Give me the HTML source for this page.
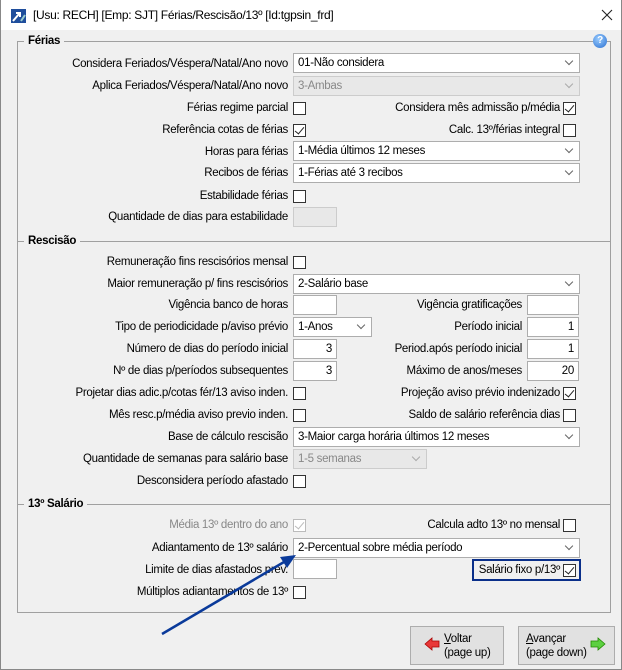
<!DOCTYPE html>
<html><head><meta charset="utf-8"><style>
*{box-sizing:border-box;margin:0;padding:0}
body{width:622px;height:670px;background:#f0f0f0;font-family:"Liberation Sans",sans-serif;font-size:11.5px;letter-spacing:-0.3px;color:#000;position:relative;overflow:hidden}
.a{position:absolute;white-space:nowrap}
.l{position:absolute;white-space:nowrap;line-height:14px}
.cb{position:absolute;width:13px;height:13px;border:1px solid #333;background:#fff}
.cb.k::after{content:"";position:absolute;left:3px;top:0px;width:4px;height:8px;border:solid #222;border-width:0 1.3px 1.3px 0;transform:rotate(40deg)}
.cb.dis{border-color:#bbb}
.cb.dis::after{border-color:#bbb}
.dd{position:absolute;height:20px;border:1px solid #adadad;background:#fff;padding:3px 4px;line-height:13px}
.dd::after{content:"";position:absolute;right:7px;top:4px;width:5px;height:5px;border:solid #666;border-width:0 1px 1px 0;transform:rotate(45deg)}
.dd.dis{background:#e8e8e8;color:#888;border-color:#ccc}
.dd.dis::after{border-color:#aaa}
.in{position:absolute;height:20px;border:1px solid #adadad;background:#fff;text-align:right;padding:3px 4px;line-height:13px}
.in.dis{background:#e8e8e8;border-color:#ccc}
.sec{position:absolute;left:17px;width:594px;border-top:1px solid #a0a0a0;height:0}
.sh{position:absolute;font-weight:bold;background:#f0f0f0;padding:0 4px;line-height:14px}
.btn{position:absolute;border:1px solid #adadad;background:#e1e1e1;line-height:14px;padding-top:5px}
</style></head><body>
<div class="a" style="left:0;top:0;width:622px;height:30px;background:#fff"></div>
<div class="a" style="left:0;top:0;width:1px;height:670px;background:#888"></div>
<div class="a" style="left:621px;top:0;width:1px;height:670px;background:#888"></div>
<div class="a" style="left:0;top:669px;width:622px;height:1px;background:#888"></div>
<svg class="a" style="left:11px;top:9px" width="15" height="14"><rect width="15" height="14" fill="#1f4e9c"/><path d="M2 12 L8 5 M5 4 L9 4 L9 8" stroke="#fff" stroke-width="2" fill="none"/><path d="M10 12 L14 6" stroke="#9cc" stroke-width="2"/></svg>
<div class="a" style="left:33px;top:8px;font-size:12px">[Usu: RECH] [Emp: SJT] Férias/Rescisão/13º [Id:tgpsin_frd]</div>
<svg class="a" style="left:601px;top:9px" width="12" height="12"><path d="M1 1 L11 11 M11 1 L1 11" stroke="#222" stroke-width="1.1"/></svg>

<div class="a" style="left:17px;top:41px;width:594px;height:572px;border:1px solid #a0a0a0;border-top:none"></div>
<div class="sec" style="top:41px"></div>
<div class="sh" style="left:24px;top:34px">Férias</div>
<div class="a" style="left:593px;top:34px;width:14px;height:14px;border-radius:50%;background:radial-gradient(circle at 40% 35%,#9cf,#2a6fd0);color:#fff;font-size:10px;font-weight:bold;text-align:center;line-height:14px">?</div>

<div class="l" style="right:334px;top:57px">Considera Feriados/Véspera/Natal/Ano novo</div>
<div class="dd" style="left:293px;top:53px;width:287px">01-Não considera</div>
<div class="l" style="right:334px;top:79px">Aplica Feriados/Véspera/Natal/Ano novo</div>
<div class="dd dis" style="left:293px;top:76px;width:287px">3-Ambas</div>
<div class="l" style="right:334px;top:101px">Férias regime parcial</div>
<div class="cb" style="left:293px;top:102px"></div>
<div class="l" style="right:62px;top:101px">Considera mês admissão p/média</div>
<div class="cb k" style="left:563px;top:102px"></div>
<div class="l" style="right:334px;top:123px">Referência cotas de férias</div>
<div class="cb k" style="left:293px;top:124px"></div>
<div class="l" style="right:62px;top:123px">Calc. 13º/férias integral</div>
<div class="cb" style="left:563px;top:124px"></div>
<div class="l" style="right:334px;top:145px">Horas para férias</div>
<div class="dd" style="left:293px;top:141px;width:287px">1-Média últimos 12 meses</div>
<div class="l" style="right:334px;top:166px">Recibos de férias</div>
<div class="dd" style="left:293px;top:163px;width:287px">1-Férias até 3 recibos</div>
<div class="l" style="right:334px;top:189px">Estabilidade férias</div>
<div class="cb" style="left:293px;top:190px"></div>
<div class="l" style="right:334px;top:210px">Quantidade de dias para estabilidade</div>
<div class="in dis" style="left:293px;top:207px;width:44px"></div>

<div class="sec" style="top:241px"></div>
<div class="sh" style="left:24px;top:234px">Rescisão</div>
<div class="l" style="right:334px;top:255px">Remuneração fins rescisórios mensal</div>
<div class="cb" style="left:293px;top:256px"></div>
<div class="l" style="right:334px;top:277px">Maior remuneração p/ fins rescisórios</div>
<div class="dd" style="left:293px;top:274px;width:287px">2-Salário base</div>
<div class="l" style="right:334px;top:298px">Vigência banco de horas</div>
<div class="in" style="left:293px;top:295px;width:44px"></div>
<div class="l" style="right:100px;top:298px">Vigência gratificações</div>
<div class="in" style="left:527px;top:295px;width:52px"></div>
<div class="l" style="right:334px;top:320px">Tipo de periodicidade p/aviso prévio</div>
<div class="dd" style="left:293px;top:317px;width:79px">1-Anos</div>
<div class="l" style="right:100px;top:320px">Período inicial</div>
<div class="in" style="left:527px;top:317px;width:52px">1</div>
<div class="l" style="right:334px;top:342px">Número de dias do período inicial</div>
<div class="in" style="left:293px;top:339px;width:44px">3</div>
<div class="l" style="right:100px;top:342px">Period.após período inicial</div>
<div class="in" style="left:527px;top:339px;width:52px">1</div>
<div class="l" style="right:334px;top:364px">Nº de dias p/períodos subsequentes</div>
<div class="in" style="left:293px;top:361px;width:44px">3</div>
<div class="l" style="right:100px;top:364px">Máximo de anos/meses</div>
<div class="in" style="left:527px;top:361px;width:52px">20</div>
<div class="l" style="right:334px;top:386px">Projetar dias adic.p/cotas fér/13 aviso inden.</div>
<div class="cb" style="left:293px;top:387px"></div>
<div class="l" style="right:62px;top:386px">Projeção aviso prévio indenizado</div>
<div class="cb k" style="left:563px;top:387px"></div>
<div class="l" style="right:334px;top:408px">Mês resc.p/média aviso previo inden.</div>
<div class="cb" style="left:293px;top:409px"></div>
<div class="l" style="right:62px;top:408px">Saldo de salário referência dias</div>
<div class="cb" style="left:563px;top:409px"></div>
<div class="l" style="right:334px;top:430px">Base de cálculo rescisão</div>
<div class="dd" style="left:293px;top:427px;width:287px">3-Maior carga horária últimos 12 meses</div>
<div class="l" style="right:334px;top:452px">Quantidade de semanas para salário base</div>
<div class="dd dis" style="left:293px;top:449px;width:134px">1-5 semanas</div>
<div class="l" style="right:334px;top:474px">Desconsidera período afastado</div>
<div class="cb" style="left:293px;top:475px"></div>

<div class="sec" style="top:504px"></div>
<div class="sh" style="left:24px;top:497px">13º Salário</div>
<div class="l" style="right:334px;top:518px;color:#888">Média 13º dentro do ano</div>
<div class="cb k dis" style="left:293px;top:519px"></div>
<div class="l" style="right:62px;top:518px">Calcula adto 13º no mensal</div>
<div class="cb" style="left:563px;top:519px"></div>
<div class="l" style="right:334px;top:541px">Adiantamento de 13º salário</div>
<div class="dd" style="left:293px;top:538px;width:287px">2-Percentual sobre média período</div>
<div class="l" style="right:334px;top:563px">Limite de dias afastados prev.</div>
<div class="in" style="left:293px;top:559px;width:44px"></div>
<div class="a" style="left:472px;top:559px;width:109px;height:22px;border:2px solid #0a2f8a"></div>
<div class="l" style="right:62px;top:563px">Salário fixo p/13º</div>
<div class="cb k" style="left:563px;top:564px"></div>
<div class="l" style="right:334px;top:585px">Múltiplos adiantamentos de 13º</div>
<div class="cb" style="left:293px;top:586px"></div>

<svg class="a" style="left:0;top:0" width="622" height="670"><line x1="162" y1="634" x2="284" y2="562" stroke="#0a3a9a" stroke-width="2.5"/><path d="M296 555 L280 557 L287 568 Z" fill="#0a3a9a"/></svg>

<div class="btn" style="left:410px;top:626px;width:94px;height:39px;padding-left:33px"><u>V</u>oltar<br>(page up)</div>
<svg class="a" style="left:424px;top:637px" width="16" height="14"><path d="M1 7 L8 1 L8 4 L15 4 L15 10 L8 10 L8 13 Z" fill="#e83838" stroke="#a00" stroke-width="0.8"/></svg>
<div class="btn" style="left:518px;top:626px;width:97px;height:39px;padding-left:7px"><u>A</u>vançar<br>(page down)</div>
<svg class="a" style="left:590px;top:637px" width="16" height="14"><path d="M15 7 L8 1 L8 4 L1 4 L1 10 L8 10 L8 13 Z" fill="#5cd040" stroke="#280" stroke-width="0.8"/></svg>
</body></html>
